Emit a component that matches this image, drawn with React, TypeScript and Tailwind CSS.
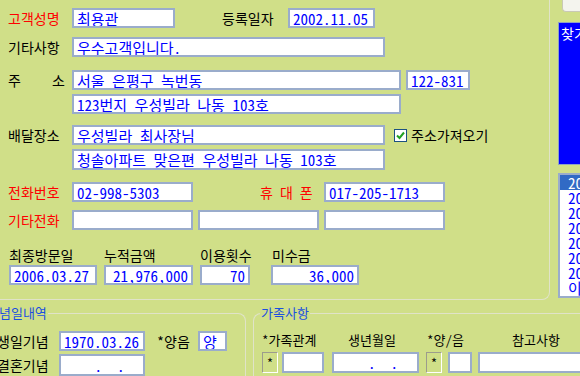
const font = { fontFamily: '"Noto Sans Mono CJK KR", "Noto Sans CJK KR", sans-serif' };

const Field = ({ w, h = "h-[20px]", value = "", right = false, className = "" }: { w: string; h?: string; value?: string; right?: boolean; className?: string }) => (
  <div
    className={`${w} ${h} ${className} shrink-0 bg-white border-2 border-[#9aaccb] flex items-center px-[3px] text-[15px] leading-none text-[#0000ff] whitespace-nowrap overflow-hidden ${right ? "justify-end" : ""}`}
  >
    {value}
  </div>
);

const Label = ({ children, w = "w-[64px]", red = false }: { children: React.ReactNode; w?: string; red?: boolean }) => (
  <div className={`${w} shrink-0 text-[14px] leading-none whitespace-nowrap ${red ? "text-[#ff0000]" : "text-black"}`}>{children}</div>
);

const Star = ({ className = "" }: { className?: string }) => (
  <div className={`${className} w-[16px] h-[21px] shrink-0 border-t border-l border-[#9c9c8c] border-b border-r border-b-white border-r-white flex items-center justify-center text-[13px] text-black`}>
    *
  </div>
);

const listItems = ["2006.03.27", "2006.02.11", "2005.12.24", "2005.10.03", "2005.07.19", "2005.05.02", "2005.02.14", "이용내역"];

export default function App() {
  return (
    <div className="w-[580px] h-[376px] bg-[#d0df88] overflow-hidden flex flex-col" style={font}>
      {/* top section */}
      <div className="h-[300px] flex shrink-0">
        <div className="w-[550px] shrink-0 border-r border-b border-[#e0e3c8] rounded-br-[8px] flex flex-col pt-[8px]">
          <div className="flex items-center pl-[8px]">
            <Label red>고객성명</Label>
            <Field w="w-[103px]" value="최용관" />
            <div className="ml-[47px]">
              <Label w="w-[66px]">등록일자</Label>
            </div>
            <Field w="w-[87px]" value="2002.11.05" />
          </div>

          <div className="flex items-center pl-[8px] mt-[9px]">
            <Label>기타사항</Label>
            <Field w="w-[313px]" value="우수고객입니다." />
          </div>

          <div className="flex items-center pl-[8px] mt-[13px]">
            <div className="w-[64px] shrink-0 flex justify-between pr-[7px] text-[14px] leading-none">
              <span>주</span>
              <span>소</span>
            </div>
            <Field w="w-[329px]" value="서울 은평구 녹번동" />
            <Field w="w-[64px]" className="ml-[5px]" value="122-831" />
          </div>

          <div className="flex items-center pl-[72px] mt-[4px]">
            <Field w="w-[329px]" value="123번지 우성빌라 나동 103호" />
          </div>

          <div className="flex items-center pl-[8px] mt-[11px]">
            <Label>배달장소</Label>
            <Field w="w-[313px]" value="우성빌라 최사장님" />
            <div className="ml-[9px] w-[13px] h-[13px] bg-white border border-[#1c5180] flex items-center justify-center">
              <svg width="9" height="9" viewBox="0 0 9 9">
                <path d="M1 4.5 L3.5 7 L8 1.5" fill="none" stroke="#21a121" strokeWidth="2" />
              </svg>
            </div>
            <div className="ml-[4px] text-[14px] leading-none">주소가져오기</div>
          </div>

          <div className="flex items-center pl-[72px] mt-[4px]">
            <Field w="w-[313px]" h="h-[21px]" value="청솔아파트 맞은편 우성빌라 나동 103호" />
          </div>

          <div className="flex items-center pl-[8px] mt-[12px]">
            <Label red>전화번호</Label>
            <Field w="w-[121px]" value="02-998-5303" />
            <div className="ml-[67px] w-[64px] shrink-0 text-[14px] leading-none text-[#ff0000] whitespace-pre">휴 대 폰</div>
            <Field w="w-[121px]" value="017-205-1713" />
          </div>

          <div className="flex items-center pl-[8px] mt-[8px]">
            <Label red>기타전화</Label>
            <Field w="w-[121px]" />
            <Field w="w-[121px]" className="ml-[5px]" />
            <Field w="w-[121px]" className="ml-[5px]" />
          </div>

          <div className="flex items-center h-[20px] mt-[15px] text-[14px] leading-none">
            <div className="ml-[9px] w-[95px]">최종방문일</div>
            <div className="w-[96px]">누적금액</div>
            <div className="w-[72px]">이용횟수</div>
            <div>미수금</div>
          </div>

          <div className="flex items-center">
            <Field w="w-[88px]" className="ml-[9px]" value="2006.03.27" />
            <Field w="w-[89px]" className="ml-[7px]" value="21,976,000" right />
            <Field w="w-[50px]" className="ml-[7px]" value="70" right />
            <Field w="w-[88px]" className="ml-[21px]" value="36,000" right />
          </div>
        </div>

        <div className="ml-[8px] flex-1 flex flex-col">
          <div className="ml-[4px] h-[12px] bg-[#f4f4ee] border-l border-b border-[#c9c9b5] rounded-bl-[4px]" />
          <div className="mt-[10px] h-[143px] border border-[#8fa3c3] bg-[#0000ff] text-white text-[14px] leading-none pt-[3px] pl-[2px] whitespace-nowrap overflow-hidden">
            찾기
          </div>
          <div className="mt-[8px] h-[125px] border-2 border-[#9aaccb] bg-white overflow-hidden">
            {listItems.map((d, i) => (
              <div
                key={d}
                className={`h-[15px] pl-[8px] text-[15px] leading-[15px] whitespace-nowrap ${i === 0 ? "bg-[#316ac5] text-white" : "text-[#0000ff]"}`}
              >
                {d}
              </div>
            ))}
          </div>
        </div>
      </div>

      {/* bottom section */}
      <div className="flex mt-[13px] flex-1">
        <div className="w-[246px] shrink-0 border-t border-r border-[#e0e3c8] rounded-tr-[8px] relative">
          <div className="absolute left-[-14px] top-[-8px] px-[1px] bg-[#d0df88] text-[13px] leading-none text-[#1a4fe0]">기념일내역</div>
          <div className="flex items-center mt-[17px]">
            <div className="ml-[-3px] w-[62px] text-[14px] leading-none">생일기념</div>
            <Field w="w-[86px]" value="1970.03.26" />
            <div className="ml-[12px] w-[41px] text-[14px] leading-none">*양음</div>
            <Field w="w-[29px]" value="양" />
          </div>
          <div className="flex items-center mt-[3px]">
            <div className="ml-[-3px] w-[62px] text-[14px] leading-none">결혼기념</div>
            <Field w="w-[86px]" h="h-[22px]" value="  .  ." className="whitespace-pre justify-center" />
          </div>
        </div>

        <div className="ml-[7px] flex-1 border-t border-l border-[#e0e3c8] rounded-tl-[8px] relative">
          <div className="absolute left-[6px] top-[-8px] px-[1px] bg-[#d0df88] text-[13px] leading-none text-[#1a4fe0]">가족사항</div>
          <div className="flex items-center mt-[18px] h-[14px] text-[13px] leading-none">
            <div className="ml-[8px] w-[86px]">*가족관계</div>
            <div className="w-[79px]">생년월일</div>
            <div className="w-[85px]">*양/음</div>
            <div>참고사항</div>
          </div>
          <div className="flex items-center mt-[6px]">
            <Star className="ml-[8px]" />
            <Field w="w-[42px]" h="h-[21px]" className="ml-[4px]" />
            <Field w="w-[87px]" h="h-[21px]" className="ml-[8px] whitespace-pre justify-center" value="  .  ." />
            <Star className="ml-[7px]" />
            <Field w="w-[24px]" h="h-[21px]" className="ml-[6px]" />
            <Field w="w-[120px]" h="h-[21px]" className="ml-[6px]" />
          </div>
        </div>
      </div>
    </div>
  );
}
